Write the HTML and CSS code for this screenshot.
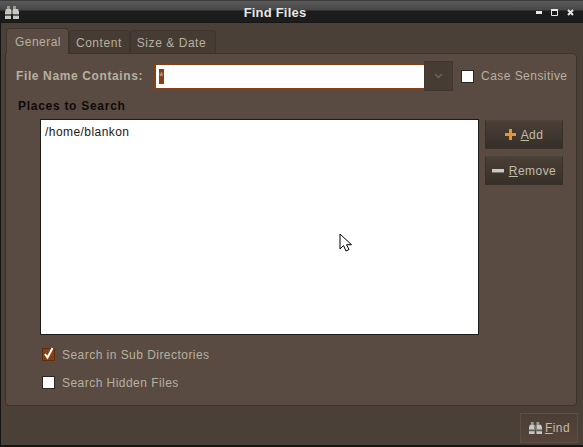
FILE: index.html
```html
<!DOCTYPE html>
<html lang="en">
<head>
<meta charset="utf-8">
<title>Find Files</title>
<link rel="stylesheet" href="styles.css">
</head>
<body>
<div class="window">
  <header class="titlebar">
    <svg class="title-icon" width="16" height="15" viewBox="0 0 16 15">
      <path d="M3 1h3v3H3zM9 1h3v3H9z" fill="#9a9a94"/>
      <path d="M2 4h5v10H1V7zM9 4h5l1 3v7H9z" fill="#c8c8c2"/>
      <path d="M1 9h6v2H1zM9 9h6v2H9z" fill="#5c5c58"/>
      <path d="M7 5h2v4H7z" fill="#77776f"/>
    </svg>
    <span class="title-text">Find Files</span>
    <div class="title-buttons">
      <svg width="6" height="3" viewBox="0 0 6 3"><path d="M0 0h6v3H0z" fill="#e8e8e8"/></svg>
      <svg width="7" height="7" viewBox="0 0 7 7"><path d="M.5 1.5h6v5h-6z" fill="none" stroke="#e8e8e8"/><path d="M0 0h7v2H0z" fill="#e8e8e8"/></svg>
      <svg width="7" height="7" viewBox="0 0 7 7"><path d="M1 1l5 5M6 1L1 6" stroke="#e8e8e8" stroke-width="2"/></svg>
    </div>
  </header>
  <main class="content">
    <nav class="tabs">
      <div class="tab tab-active">General</div>
      <div class="tab">Content</div>
      <div class="tab">Size &amp; Date</div>
    </nav>
    <section class="panel">
      <div class="name-row">
        <span class="label-bold">File Name Contains:</span>
        <div class="combo">
          <div class="entry"><span class="selection">*</span></div>
          <div class="combo-button">
            <svg width="9" height="6" viewBox="0 0 9 6"><path d="M1 1l3.5 3.5L8 1" fill="none" stroke="#6d6358" stroke-width="1.5"/></svg>
          </div>
        </div>
        <div class="check-item case-check"><span class="checkbox"></span><span class="check-label">Case Sensitive</span></div>
      </div>
      <h2 class="section-title">Places to Search</h2>
      <div class="places-row">
        <div class="places-list">/home/blankon</div>
        <div class="side-buttons">
          <div class="button">
            <svg width="11" height="11" viewBox="0 0 11 11"><path d="M4 0h3v4h4v3H7v4H4V7H0V4h4z" fill="#e2982f"/></svg>
            <span><u>A</u>dd</span>
          </div>
          <div class="button">
            <svg width="12" height="4" viewBox="0 0 12 4"><path d="M0 0h12v4H0z" fill="#c9c9c2"/><path d="M0 3h12v1H0z" fill="#77776f"/></svg>
            <span><u>R</u>emove</span>
          </div>
        </div>
      </div>
      <div class="options">
        <div class="check-item"><span class="checkbox checked"><svg width="11" height="13" viewBox="0 0 11 13"><path d="M2 7l2.5 3.5L9.5 1" fill="none" stroke="#fff" stroke-width="2"/></svg></span><span class="check-label">Search in Sub Directories</span></div>
        <div class="check-item"><span class="checkbox"></span><span class="check-label">Search Hidden Files</span></div>
      </div>
    </section>
    <footer class="actions">
      <div class="button find-button">
        <svg width="15" height="14" viewBox="0 0 16 15">
          <path d="M3 1h3v3H3zM9 1h3v3H9z" fill="#9a9a94"/>
          <path d="M2 4h5v10H1V7zM9 4h5l1 3v7H9z" fill="#c8c8c2"/>
          <path d="M1 9h6v2H1zM9 9h6v2H9z" fill="#5c5c58"/>
          <path d="M7 5h2v4H7z" fill="#77776f"/>
        </svg>
        <span><u>F</u>ind</span>
      </div>
    </footer>
  </main>
</div>
<svg class="pointer" width="14" height="20" viewBox="0 0 14 20">
  <path d="M1 1v15l3.5-3.5 2.5 5.5 3-1.5-2.5-4.8H12.5z" fill="#fff" stroke="#000" stroke-width="1"/>
</svg>
</body>
</html>
```
FILE: styles.css
```css
* { box-sizing: border-box; }
html, body { margin: 0; padding: 0; }
body {
  width: 583px;
  height: 447px;
  overflow: hidden;
  position: relative;
  font-family: "Liberation Sans", Arial, sans-serif;
  font-size: 12px;
  letter-spacing: 0.46px;
  color: #b5b1a0;
  background: #161513;
}
.window { width: 583px; height: 447px; display: flex; flex-direction: column; }
.titlebar {
  height: 23px;
  flex: none;
  display: flex;
  align-items: center;
  position: relative;
  padding: 0 8px 0 4px;
  border-top: 1px solid #3c3c3c;
  background: linear-gradient(#5a5a5a 0, #474747 9px, #1c1c1c 10px, #1c1c1c 21px, #111 100%);
}
.title-icon { flex: none; }
.title-text {
  position: absolute;
  left: 0;
  right: 33px;
  text-align: center;
  color: #e6e6e6;
  font-weight: bold;
  font-size: 13px;
  letter-spacing: 0.2px;
}
.title-buttons { margin-left: auto; display: flex; align-items: center; gap: 9px; margin-right: 1px; }
.content {
  flex: 1;
  margin: 0 0 2px 1px;
  padding: 5px 6px 0 4px;
  background: #4b4038;
  display: flex;
  flex-direction: column;
  min-height: 0;
}
.tabs { display: flex; align-items: flex-end; height: 25px; padding-left: 1px; position: relative; z-index: 1; }
.tab {
  height: 23px;
  padding: 4px 7px 0 6px;
  border: 1px solid #3f352e;
  border-bottom: 0;
  border-radius: 4px 4px 0 0;
  background: #463c34;
  line-height: 16px;
  white-space: nowrap;
  letter-spacing: 0.55px;
}
.tab:last-child { padding-right: 9px; }
.tab-active { height: 26px; margin-bottom: -1px; padding: 5px 7px 0 8px; background: #5a4b42; border-color: #3f352e; letter-spacing: 0.46px; }
.panel {
  height: 353px;
  flex: none;
  background: #5a4b42;
  border: 1px solid #3b322c;
  border-radius: 0 4px 4px 4px;
  padding: 7px 9px 0 10px;
  display: flex;
  flex-direction: column;
}
.name-row { display: flex; align-items: center; height: 30px; }
.label-bold { font-weight: bold; width: 138px; flex: none; letter-spacing: 0.62px; white-space: nowrap; }
.combo { display: flex; align-items: center; flex: none; }
.entry {
  width: 270px;
  height: 27px;
  background: #fff;
  border: 2px solid #8a3f12;
  border-right: 0;
  padding: 4px 3px;
  display: flex;
  align-items: center;
}
.selection { background: #8a3f12; color: #c9a58a; width: 5px; height: 15px; line-height: 17px; display: block; letter-spacing: 0; }
.combo-button {
  width: 29px;
  height: 30px;
  background: #463c34;
  border: 1px solid #41372f;
  display: flex;
  align-items: center;
  justify-content: center;
}
.check-item { display: flex; align-items: center; gap: 7px; white-space: nowrap; }
.case-check { margin-left: 8px; }
.checkbox {
  width: 13px;
  height: 13px;
  flex: none;
  background: #fff;
  border: 1px solid #2c2622;
  position: relative;
  display: block;
}
.checkbox.checked { background: #8a3f12; border-color: #5e2c0e; }
.checkbox svg { position: absolute; left: 0; top: -2px; }
.section-title { margin: 8px 0 0 2px; font-size: 12px; font-weight: bold; letter-spacing: 0.72px; color: #0d0b0a; height: 19px; line-height: 15px; }
.places-row { display: flex; align-items: flex-start; padding-left: 24px; margin-top: 1px; }
.places-list {
  width: 439px;
  height: 216px;
  background: #fff;
  border: 1px solid #1d1a18;
  color: #1a1a1a;
  letter-spacing: 0.44px;
  padding: 5px 4px;
  line-height: 15px;
  flex: none;
}
.side-buttons { margin-left: 6px; display: flex; flex-direction: column; gap: 7px; padding-top: 1px; }
.button {
  width: 78px;
  height: 29px;
  display: flex;
  align-items: center;
  justify-content: center;
  gap: 5px;
  border: 1px solid #3a312a;
  border-top-color: #4e433a;
  background: linear-gradient(#4a3f37, #36302a);
  color: #c0bcaa;
}
.options { display: flex; flex-direction: column; gap: 15px; margin-top: 13px; padding-left: 26px; }
.options .check-item { height: 13px; }
.actions { flex: 1; display: flex; justify-content: flex-end; align-items: flex-start; padding-top: 7px; margin-right: -1px; }
.find-button { width: 58px; height: 30px; gap: 2px; background: linear-gradient(#4b3e35, #56443a); border-color: #5d4e44; }
.pointer { position: absolute; left: 339px; top: 233px; }
```
